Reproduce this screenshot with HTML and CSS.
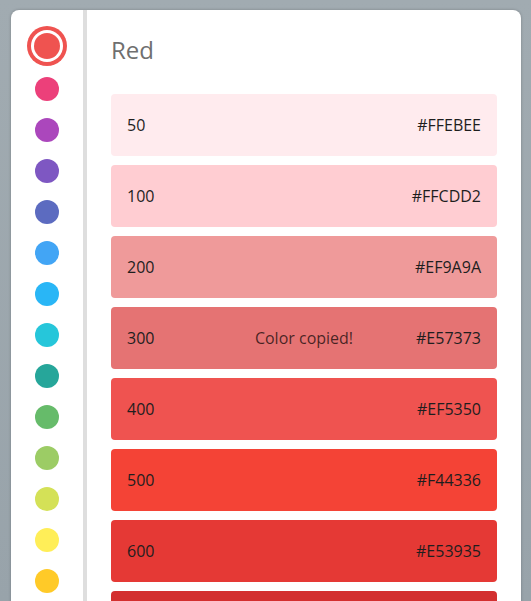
FILE: index.html
```html
<!DOCTYPE html>
<html>
<head>
<meta charset="utf-8">
<link rel="stylesheet" href="styles.css">
</head>
<body>
<div class="card">
  <nav class="sidebar">
    <span class="dot selected" style="background:#EF5350"></span>
    <span class="dot" style="background:#EC407A"></span>
    <span class="dot" style="background:#AB47BC"></span>
    <span class="dot" style="background:#7E57C2"></span>
    <span class="dot" style="background:#5C6BC0"></span>
    <span class="dot" style="background:#42A5F5"></span>
    <span class="dot" style="background:#29B6F6"></span>
    <span class="dot" style="background:#26C6DA"></span>
    <span class="dot" style="background:#26A69A"></span>
    <span class="dot" style="background:#66BB6A"></span>
    <span class="dot" style="background:#9CCC65"></span>
    <span class="dot" style="background:#D4E157"></span>
    <span class="dot" style="background:#FFEE58"></span>
    <span class="dot" style="background:#FFCA28"></span>
  </nav>
  <main class="main">
    <h1 class="title">Red</h1>
    <ul class="shades">
      <li class="shade" style="background:#FFEBEE"><span>50</span><span>#FFEBEE</span></li>
      <li class="shade" style="background:#FFCDD2"><span>100</span><span>#FFCDD2</span></li>
      <li class="shade" style="background:#EF9A9A"><span>200</span><span>#EF9A9A</span></li>
      <li class="shade" style="background:#E57373"><span>300</span><span class="copied">Color copied!</span><span>#E57373</span></li>
      <li class="shade" style="background:#EF5350"><span>400</span><span>#EF5350</span></li>
      <li class="shade" style="background:#F44336"><span>500</span><span>#F44336</span></li>
      <li class="shade" style="background:#E53935"><span>600</span><span>#E53935</span></li>
      <li class="shade" style="background:#D32F2F"><span>700</span><span>#D32F2F</span></li>
    </ul>
  </main>
</div>
</body>
</html>
```
FILE: styles.css
```css
html, body {
  margin: 0;
  padding: 0;
  height: 100%;
  overflow: hidden;
}
body {
  background: linear-gradient(180deg, #a1abb1 0%, #98a3aa 100%);
  font-family: "Open Sans", "Noto Sans", sans-serif;
}
.card {
  margin: 10px 10px 0 11px;
  background: #fff;
  border-radius: 8px 8px 0 0;
  display: flex;
  min-height: 700px;
  box-shadow: 0 0 3px rgba(0,0,0,0.25);
}
.sidebar {
  width: 72px;
  border-right: 4px solid #dedede;
  display: flex;
  flex-direction: column;
  align-items: center;
  padding-top: 16px;
  gap: 17px;
  box-sizing: content-box;
}
.dot {
  display: block;
  width: 24px;
  height: 24px;
  border-radius: 50%;
  flex: none;
}
.dot.selected {
  width: 26px;
  height: 26px;
  margin: 7px 0 1px;
  box-shadow: 0 0 0 3px #fff, 0 0 0 7px #EF5350;
}
.main {
  flex: 1;
  padding: 0 24px;
}
.title {
  margin: 0;
  padding-top: 24px;
  height: 84px;
  box-sizing: border-box;
  font-size: 24px;
  font-weight: 400;
  color: #6f6f6f;
  line-height: 32px;
}
.shades {
  list-style: none;
  margin: 0;
  padding: 0;
  display: flex;
  flex-direction: column;
  gap: 9px;
}
.shade {
  height: 62px;
  border-radius: 4px;
  display: flex;
  align-items: center;
  justify-content: space-between;
  padding: 0 16px;
  font-size: 16px;
  color: #1e1e1e;
  position: relative;
}
.copied {
  position: absolute;
  left: 0;
  right: 0;
  text-align: center;
  color: rgba(0,0,0,0.7);
}
```
